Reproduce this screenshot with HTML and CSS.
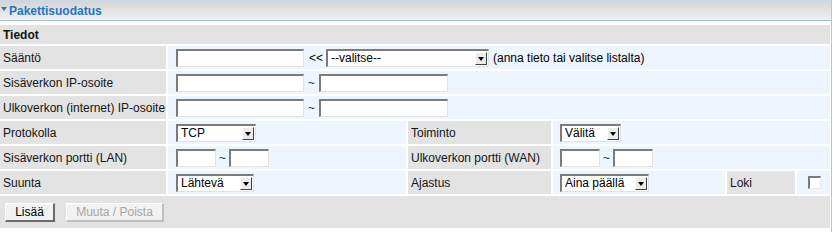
FILE: index.html
```html
<!DOCTYPE html>
<html lang="fi">
<head>
<meta charset="utf-8">
<title>Pakettisuodatus</title>
<link rel="stylesheet" href="styles.css">
</head>
<body>
<div class="page">
  <div class="titlebar">
    <span class="tri"></span>
    <span class="title">Pakettisuodatus</span>
  </div>
  <form class="grid">
    <div class="section">Tiedot</div>

    <div class="lbl">Sääntö</div>
    <div class="val span5">
      <input class="txt w128" type="text">
      <span class="lt">&lt;&lt;</span>
      <span class="sel w163"><select><option>--valitse--</option></select><span class="arr"></span></span>
      <span class="hint">(anna tieto tai valitse listalta)</span>
    </div>

    <div class="lbl">Sisäverkon IP-osoite</div>
    <div class="val span5">
      <input class="txt w128" type="text">
      <span class="tilde">~</span>
      <input class="txt w129" type="text">
    </div>

    <div class="lbl">Ulkoverkon (internet) IP-osoite</div>
    <div class="val span5">
      <input class="txt w128" type="text">
      <span class="tilde">~</span>
      <input class="txt w129" type="text">
    </div>

    <div class="lbl">Protokolla</div>
    <div class="val">
      <span class="sel w80"><select><option>TCP</option></select><span class="arr"></span></span>
    </div>
    <div class="lbl">Toiminto</div>
    <div class="val r span3">
      <span class="sel w61"><select><option>Välitä</option></select><span class="arr"></span></span>
    </div>

    <div class="lbl">Sisäverkon portti (LAN)</div>
    <div class="val">
      <input class="txt w40" type="text">
      <span class="tilde sm">~</span>
      <input class="txt w40" type="text">
    </div>
    <div class="lbl">Ulkoverkon portti (WAN)</div>
    <div class="val r span3">
      <input class="txt w40" type="text">
      <span class="tilde sm">~</span>
      <input class="txt w40" type="text">
    </div>

    <div class="lbl">Suunta</div>
    <div class="val">
      <span class="sel w78"><select><option>Lähtevä</option></select><span class="arr"></span></span>
    </div>
    <div class="lbl">Ajastus</div>
    <div class="val r">
      <span class="sel w89"><select><option>Aina päällä</option></select><span class="arr"></span></span>
    </div>
    <div class="lbl">Loki</div>
    <div class="val cb"><input class="chk" type="checkbox"></div>

    <div class="actions">
      <button class="btn w50" type="button">Lisää</button>
      <button class="btn w98" type="button" disabled>Muuta / Poista</button>
    </div>
  </form>
</div>
</body>
</html>
```
FILE: styles.css
```css
* { box-sizing: border-box; }
html, body { margin: 0; padding: 0; background: #fff; }
body {
  font-family: Arial, "Liberation Sans", sans-serif;
  font-size: 12px;
  color: #141414;
}
.page {
  width: 832px;
  min-height: 232px;
  border-right: 1px solid #b3c7dc;
}
.titlebar {
  height: 21px;
  border-top: 1px solid #c9d8e7;
  border-bottom: 1px solid #a9bdd3;
  background: linear-gradient(#d4d4d4, #f1f1f1);
  display: flex;
  align-items: center;
  padding-left: 1px;
}
.tri {
  width: 0;
  height: 0;
  border-left: 3px solid transparent;
  border-right: 3px solid transparent;
  border-top: 4px solid #2b72bd;
  margin-right: 2px;
  margin-top: -3px;
}
.title {
  font-weight: bold;
  font-size: 12px;
  color: #1c76c9;
}
.grid {
  display: grid;
  width: 830px;
  grid-template-columns: 166px 238px 143px 172px 68px 33px;
  grid-template-rows: 19px repeat(6, 23px) 32px;
  gap: 2px;
  margin: 4px 0 0 0;
}
.section {
  grid-column: 1 / -1;
  background: #e3e3e3;
  font-weight: bold;
  padding-left: 3px;
  display: flex;
  align-items: center;
}
.lbl {
  background: #e3e3e3;
  padding-left: 3px;
  display: flex;
  align-items: center;
  white-space: nowrap;
}
.val {
  background: #edf5fe;
  display: flex;
  align-items: center;
  padding-left: 8px;
  white-space: nowrap;
}
.val.r { padding-left: 7px; }
.val.cb { padding: 0; justify-content: center; }
.span5 { grid-column: 2 / -1; }
.span3 { grid-column: 4 / -1; }

.txt {
  height: 18px;
  margin: 0;
  padding: 0 2px;
  border-style: solid;
  border-width: 2px 1px 1px 2px;
  border-color: #7b7b7b #e2e2e2 #e2e2e2 #7b7b7b;
  background: #fff;
  font: 12px Arial, "Liberation Sans", sans-serif;
}
.w128 { width: 128px; }
.w129 { width: 129px; }
.w40 { width: 40px; }

.lt { margin: 0 3px 0 5px; color: #000; }
.tilde { margin: 0 4px 0 4px; color: #333; }
.tilde.sm { margin: 0 3px 0 3px; }
.hint { margin-left: 4px; color: #000; }

.sel {
  display: inline-flex;
  height: 18px;
  border-style: solid;
  border-width: 2px 1px 1px 2px;
  border-color: #7b7b7b #e2e2e2 #e2e2e2 #7b7b7b;
  background: #fff;
}
.sel select {
  -webkit-appearance: none;
  appearance: none;
  border: 0;
  outline: none;
  background: transparent;
  font: 12px Arial, "Liberation Sans", sans-serif;
  color: #000;
  padding: 0 0 0 3px;
  margin: 0;
  flex: 1;
  min-width: 0;
  height: 100%;
}
.arr {
  width: 12px;
  margin: 1px 1px 1px 0;
  background: #ebebeb;
  border-style: solid;
  border-width: 1px;
  border-color: #ffffff #3f3f3f #3f3f3f #ffffff;
  display: flex;
  align-items: center;
  justify-content: center;
}
.arr::after {
  content: "";
  border-left: 3px solid transparent;
  border-right: 3px solid transparent;
  border-top: 4px solid #000;
  margin-top: 1px;
}
.w163 { width: 163px; }
.w80 { width: 80px; }
.w78 { width: 78px; }
.w61 { width: 61px; }
.w89 { width: 89px; }

.chk {
  -webkit-appearance: none;
  appearance: none;
  width: 13px;
  height: 13px;
  margin: 0 0 0 1px;
  border-style: solid;
  border-width: 2px 1px 1px 2px;
  border-color: #7b7b7b #e8e8e8 #e8e8e8 #7b7b7b;
  background: #fff;
}

.actions {
  grid-column: 1 / -1;
  background: #e3e3e3;
  display: flex;
  align-items: center;
  padding-left: 5px;
  gap: 11px;
}
.btn {
  height: 19px;
  padding: 0;
  margin: 0;
  font: 12px Arial, "Liberation Sans", sans-serif;
  color: #000;
  background: #f2f2f2;
  border-style: solid;
  border-width: 1px 2px 2px 1px;
  border-color: #ffffff #6a6a6a #6a6a6a #ffffff;
}
.btn:disabled {
  color: #a5a5a5;
  border-color: #ffffff #bdbdbd #bdbdbd #ffffff;
}
.w50 { width: 50px; }
.w98 { width: 98px; }
```
